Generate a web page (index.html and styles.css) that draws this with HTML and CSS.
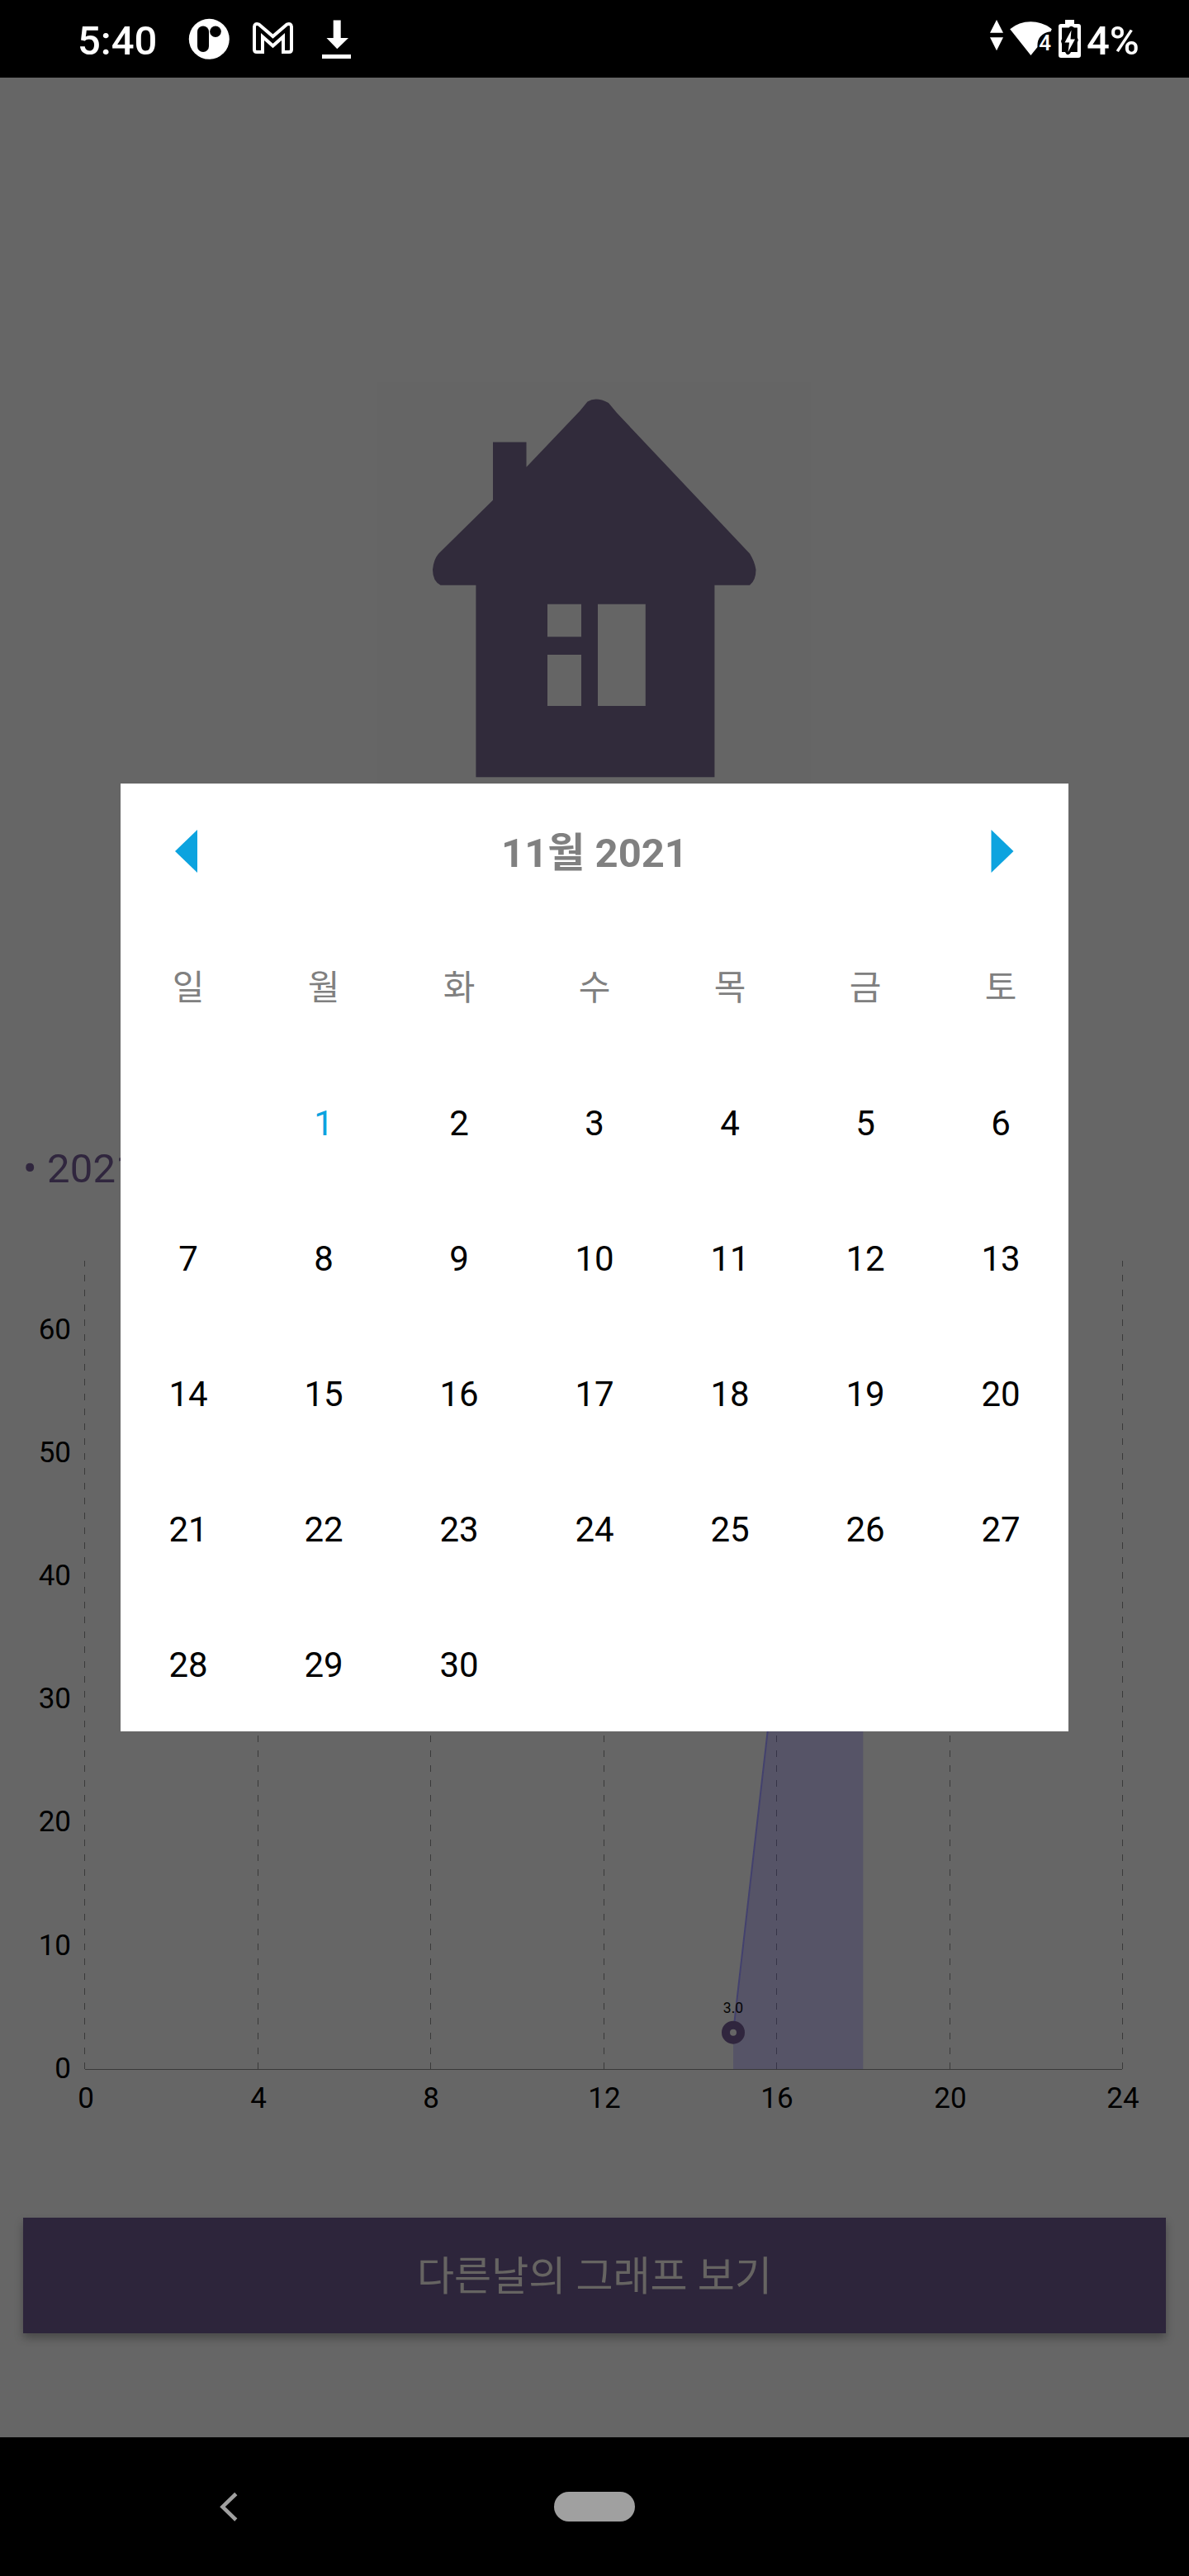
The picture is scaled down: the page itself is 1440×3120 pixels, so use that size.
FILE: index.html
```html
<!DOCTYPE html>
<html lang="ko">
<head>
<meta charset="utf-8">
<title>그래프</title>
<link rel="stylesheet" href="styles.css">
</head>
<body>
<div class="screen">
  <header class="status">
    <span class="clock">5:40</span>
    <svg class="notices" width="220" height="94" viewBox="220 0 220 94">
      <circle cx="253.3" cy="47.3" r="24.5" fill="#fff"/>
      <rect x="239" y="31.5" width="14" height="31.5" rx="7"/>
      <circle cx="261" cy="38.3" r="6.8"/>
      <path d="M318 63V44.5L330.5 55.5L343 44.5V63H350Q353 63 353 60V32.5Q352.500 27.500 347.500 29.500L330.500 44L313.500 29.500Q308.500 27.500 308 32.500V60Q308 63 311 63Z" fill="none" stroke="#fff" stroke-width="4"/>
      <path d="M403.7 24.5h9V46H422L408.3 59.3L395.5 46h8.2zM390 66h35v5h-35z" fill="#fff"/>
    </svg>
    <svg class="signals" width="120" height="94" viewBox="1195 0 120 94">
      <path d="M1207 24L1215 39.7H1199zM1207 61.3L1199 45.3H1215z" fill="#fff"/>
      <path d="M1248.4 67L1223.2 35.2Q1234 26.2 1248.4 26.2T1273.8 35.2L1272.5 38.2Q1255.5 41 1256.5 57z" fill="#fff"/>
      <text class="net" x="1258.2" y="61">4</text>
      <path d="M1290 24h11v5h5q3 0 3 3v35q0 3-3 3h-21q-3 0-3-3V32q0-3 3-3h5z" fill="#fff"/>
      <path d="M1286 33.5h8.5q2-3 5-1l1.5 1h3.8v12l1 3-1 3v11.5h-7.8q-2 5-5.500 2.500l-1.500-2.500h-4V53l-1-3 1-3z"/>
      <path d="M1297.500 36.500L1289.500 51.500H1295L1293.500 63L1302 47.500H1296.500z" fill="#fff"/>
    </svg>
    <span class="level">4%</span>
  </header>
  <main class="page">
    <div class="hero">
      <svg width="526" height="526" viewBox="456 463 526 526">
        <rect x="456" y="463" width="526" height="526" fill="#656565"/>
        <path fill="#312b3b" fill-rule="evenodd" d="M597 535.500h40.500v30.200L702.500 497.500L711.500 486.500Q722 480 737 488L747 500L908 670.500Q914 680 915.500 690Q915.500 703 908 708.700H865.400V941.300H576.400V708.700H533.600Q524 704 524 690Q525 678 531 670.700L597 605.700zM663 731.700V771.300H704V731.700zM663 793V855H704V793zM724 731.700V855H781.800V731.700z"/>
      </svg>
    </div>
    <p class="day">• 2021년</p>
    <svg class="chart" width="1440" height="1060" viewBox="0 1520 1440 1060">
      <g class="grid">
        <path d="M102.500 2506V1527M312.500 2506V1527M521.500 2506V1527M731.500 2506V1527M940.500 2506V1527M1150.500 2506V1527M1359.500 2506V1527"/>
      </g>
      <path d="M888 2461.500L940.300 2004H1045.300V2506H888z" fill="#30296b" fill-opacity=".28"/>
      <path d="M888 2461.500L940.300 2004H1045.300" fill="none" stroke="#43416e" stroke-width="2"/>
      <path d="M103 2506.500H1359" stroke="#3a3a3a"/>
      <circle cx="888" cy="2461.700" r="9" fill="#666" stroke="#30263e" stroke-width="10"/>
      <text class="value" x="888" y="2438">3.0</text>
      <g class="ylabels">
        <text x="86" y="1622">60</text><text x="86" y="1771">50</text><text x="86" y="1920">40</text><text x="86" y="2069">30</text><text x="86" y="2218">20</text><text x="86" y="2368">10</text><text x="86" y="2517">0</text>
      </g>
      <g class="xlabels">
        <text x="104" y="2553">0</text><text x="313" y="2553">4</text><text x="522" y="2553">8</text><text x="732" y="2553">12</text><text x="941" y="2553">16</text><text x="1151" y="2553">20</text><text x="1360" y="2553">24</text>
      </g>
    </svg>
    <button class="more">다른날의 그래프 보기</button>
  </main>
  <nav class="nav">
    <svg class="back" width="24" height="36" viewBox="266 3018 24 36"><path d="M285.800 3020.500L269.500 3036.200L285.800 3052" fill="none" stroke="#a0a0a0" stroke-width="4.600"/></svg>
    <span class="home"></span>
  </nav>
  <section class="dialog">
    <div class="month">
      <svg width="28" height="52" viewBox="0 0 28 52"><path d="M0 26L27 0V52z" fill="#0ca3df"/></svg>
      <h1>11월 2021</h1>
      <svg width="28" height="52" viewBox="0 0 28 52"><path d="M27.500 26L.5 0V52z" fill="#0ca3df"/></svg>
    </div>
    <div class="days">
      <b>일</b><b>월</b><b>화</b><b>수</b><b>목</b><b>금</b><b>토</b>
      <i></i><i class="today">1</i><i>2</i><i>3</i><i>4</i><i>5</i><i>6</i>
      <i>7</i><i>8</i><i>9</i><i>10</i><i>11</i><i>12</i><i>13</i>
      <i>14</i><i>15</i><i>16</i><i>17</i><i>18</i><i>19</i><i>20</i>
      <i>21</i><i>22</i><i>23</i><i>24</i><i>25</i><i>26</i><i>27</i>
      <i>28</i><i>29</i><i>30</i>
    </div>
  </section>
</div>
</body>
</html>
```
FILE: styles.css
```css
* { box-sizing: border-box; margin: 0; padding: 0; }
body { font-family: Roboto, "Noto Sans CJK KR", sans-serif; background: #000; }
svg { display: block; flex: none; }
.screen { position: relative; width: 1440px; height: 3120px; display: flex; flex-direction: column; overflow: hidden; }

.status { height: 94px; flex: none; display: flex; align-items: center; background: #000; color: #fff; font-size: 49px; font-weight: 500; line-height: 98px; padding-left: 94px; }
.clock { width: 126px; padding-top: 6px; }
.signals { margin-left: 755px; }
.net { font-size: 26px; font-weight: 500; fill: #fff; }
.level { margin-left: 1px; padding-top: 6px; }

.page { flex: 1; background: #666; display: flex; flex-direction: column; }
.hero { height: 1257px; padding-top: 369px; display: flex; justify-content: center; align-items: flex-start; }
.hero svg { margin-left: -2px; }
.day { height: 169px; padding: 36px 28px 0; font-size: 49px; line-height: 58px; color: #30263e; white-space: nowrap; letter-spacing: .2px; }
.grid path { fill: none; stroke: #3a3a3a; stroke-width: 1; stroke-dasharray: 8 10; stroke-dashoffset: 0; }
.ylabels, .xlabels { font-size: 35px; fill: #000; }
.ylabels { text-anchor: end; }
.xlabels { text-anchor: middle; }
.value { font-size: 17.5px; fill: #060606; text-anchor: middle; }
.more { display: block; width: 1384px; height: 140px; margin: 106px 28px 0; padding-top: 4px; flex: none; border: 0; background: #2d253b; color: #666462; font: 400 49px/136px Roboto, "Noto Sans CJK KR", sans-serif; box-shadow: 0 6px 10px rgba(0, 0, 0, .28); }

.nav { height: 168px; flex: none; background: #000; display: flex; align-items: center; padding-left: 266px; }
.home { width: 98px; height: 36px; border-radius: 18px; background: #a0a0a0; margin-left: 381px; }

.dialog { position: absolute; left: 146px; top: 949px; width: 1148px; height: 1148px; background: #fff; }
.month { height: 164px; display: flex; align-items: center; justify-content: space-between; padding: 0 66px; }
.month h1 { font-size: 49px; line-height: 164px; font-weight: 700; color: #808080; padding-top: 6px; }
.days { display: grid; grid-template-columns: repeat(7, 164px); grid-auto-rows: 164px; font-size: 42px; line-height: 168px; text-align: center; color: #000; }
.days b { font-weight: 400; color: #808080; }
.days i { font-style: normal; }
.days .today { color: #0ca3df; }
```
